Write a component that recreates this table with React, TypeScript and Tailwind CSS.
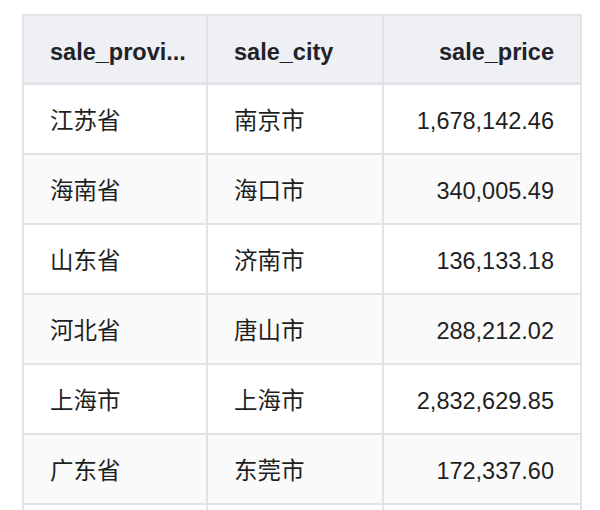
const rows = [
  { province: '江苏省', city: '南京市', price: '1,678,142.46' },
  { province: '海南省', city: '海口市', price: '340,005.49' },
  { province: '山东省', city: '济南市', price: '136,133.18' },
  { province: '河北省', city: '唐山市', price: '288,212.02' },
  { province: '上海市', city: '上海市', price: '2,832,629.85' },
  { province: '广东省', city: '东莞市', price: '172,337.60' },
]

export default function App() {
  return (
    <div
      className="min-h-screen bg-white pt-[14px] pl-[22px] overflow-hidden"
      style={{ fontFamily: '"Liberation Sans", "Noto Sans CJK SC", sans-serif' }}
    >
      <div className="w-[560px] bg-[#e2e3e8] p-[2px] flex flex-col">
        {/* Header */}
        <div className="grid grid-cols-[182px_174px_196px] gap-x-[2px] mb-[3px]">
          <HeaderCell>sale_provi...</HeaderCell>
          <HeaderCell>sale_city</HeaderCell>
          <HeaderCell right>sale_price</HeaderCell>
        </div>

        {/* Body */}
        <div className="flex flex-col gap-y-[2px]">
          {rows.map((r, i) => (
            <div key={i} className="grid grid-cols-[182px_174px_196px] gap-x-[2px]">
              <BodyCell striped={i % 2 === 1}>{r.province}</BodyCell>
              <BodyCell striped={i % 2 === 1}>{r.city}</BodyCell>
              <BodyCell striped={i % 2 === 1} right>{r.price}</BodyCell>
            </div>
          ))}
          <div className="grid grid-cols-[182px_174px_196px] gap-x-[2px]">
            <BodyCell>{''}</BodyCell>
            <BodyCell>{''}</BodyCell>
            <BodyCell right>{''}</BodyCell>
          </div>
        </div>
      </div>
    </div>
  )
}

function HeaderCell({ children, right }: { children: React.ReactNode; right?: boolean }) {
  return (
    <div
      className={`h-[66px] bg-[#eff0f4] flex items-center pt-[7px] px-[26px] text-[23.5px] font-bold text-[#1f2329] whitespace-nowrap ${
        right ? 'justify-end' : ''
      }`}
    >
      {children}
    </div>
  )
}

function BodyCell({ children, right, striped }: { children: React.ReactNode; right?: boolean; striped?: boolean }) {
  return (
    <div
      className={`h-[68px] flex items-center pt-[6px] px-[26px] text-[23.5px] text-[#1f1f1f] whitespace-nowrap ${
        striped ? 'bg-[#fafafa]' : 'bg-white'
      } ${right ? 'justify-end' : ''}`}
    >
      {children}
    </div>
  )
}
